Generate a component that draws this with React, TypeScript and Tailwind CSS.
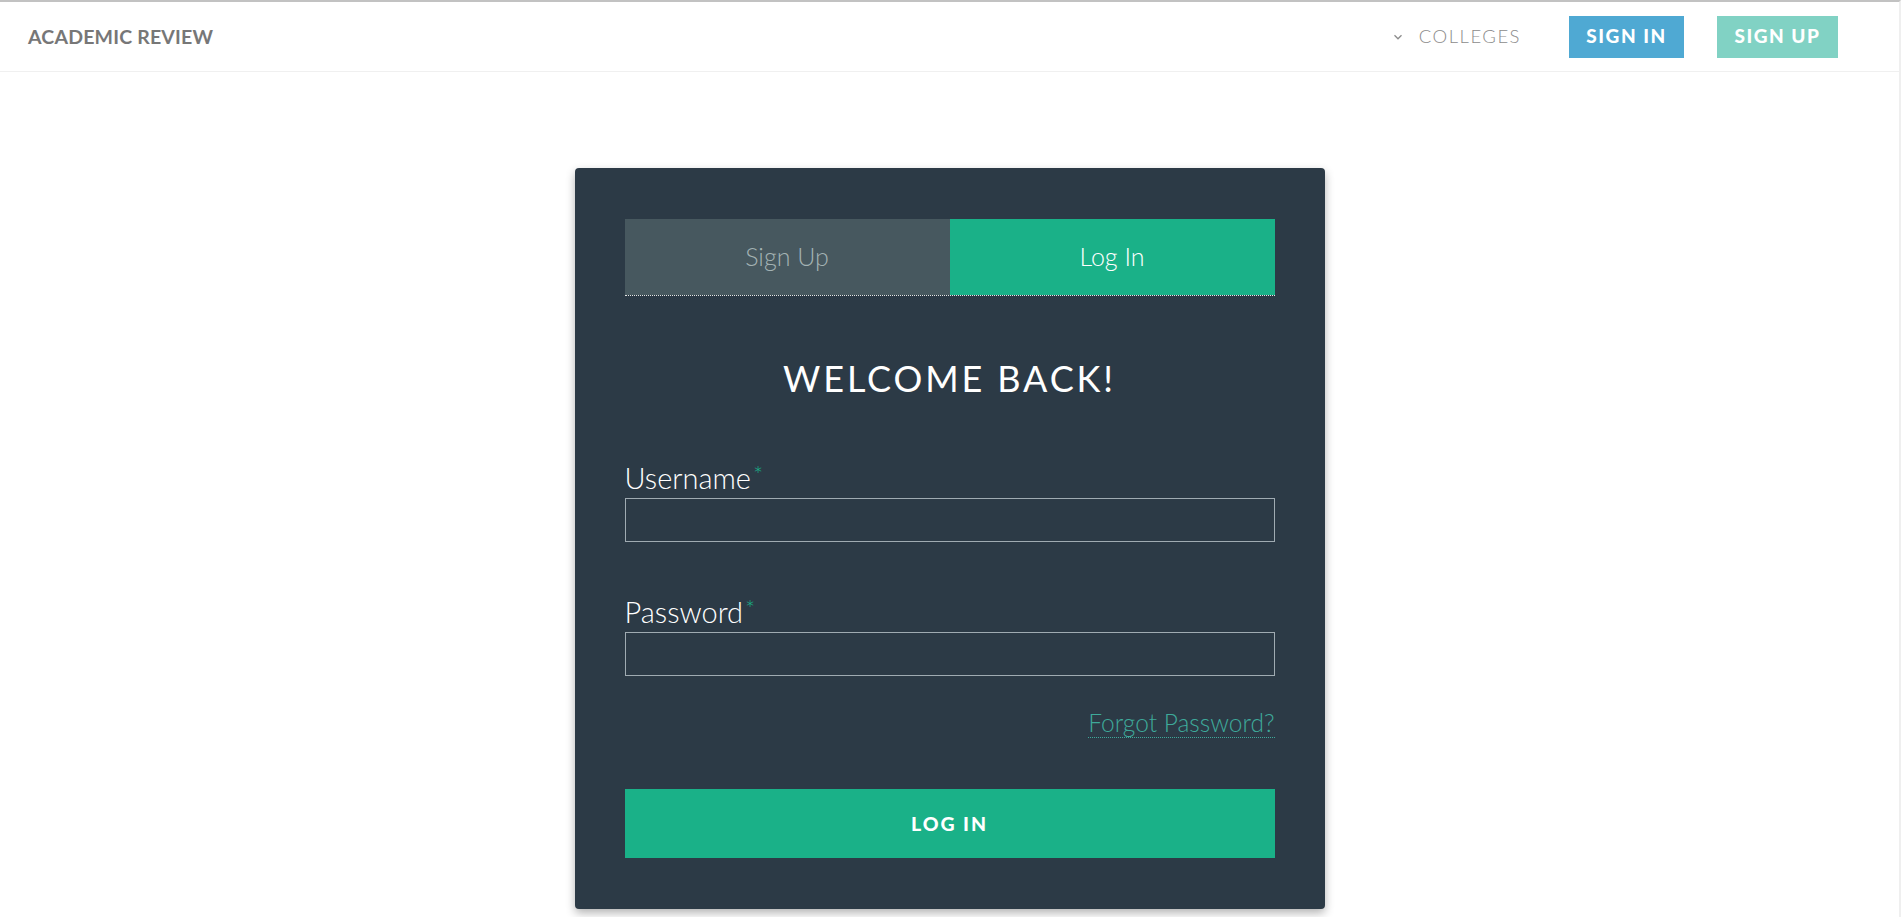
import React, { useState } from 'react';

const font = { fontFamily: 'Lato, "Open Sans", sans-serif' };

const Field = ({ label, type }: { label: string; type: string }) => (
  <div className="flex flex-col">
    <label className="text-[29px] leading-[32px] font-light text-white">
      {label}
      <span className="ml-[2px] text-[#1ab188] text-[24px] align-top leading-[26px]">*</span>
    </label>
    <input
      type={type}
      className="mt-[4px] h-[44px] w-full border border-[#a0abb2] bg-transparent px-3 text-white outline-none"
    />
  </div>
);

export default function App() {
  const [tab, setTab] = useState<'signup' | 'login'>('login');

  return (
    <div
      className="min-h-screen bg-white border-t-2 border-t-[#c2c2c2] border-r-2 border-r-[#efefef]"
      style={font}
    >
      {/* Header */}
      <header className="h-[70px] flex items-center justify-between border-b border-[#f0f0f0] pl-[28px] pr-[61px]">
        <span className="text-[19.5px] font-bold text-[#777777] tracking-[0.01em]">
          ACADEMIC REVIEW
        </span>
        <nav className="flex items-center">
          <button className="flex items-center text-[#8c8c8c]">
            <svg
              className="w-[14px] h-[14px] mr-[14px]"
              fill="none"
              stroke="currentColor"
              viewBox="0 0 24 24"
            >
              <path strokeWidth={2.2} d="M6 9l6 6 6-6" />
            </svg>
            <span className="text-[18.5px] font-light tracking-[0.08em]">COLLEGES</span>
          </button>
          <button className="ml-[48px] w-[115px] h-[42px] bg-[#4fa9d3] text-white text-[19px] font-black tracking-[0.08em]">
            SIGN IN
          </button>
          <button className="ml-[33px] w-[121px] h-[42px] bg-[#81d2c4] text-white text-[19px] font-black tracking-[0.08em]">
            SIGN UP
          </button>
        </nav>
      </header>

      {/* Login card */}
      <main className="flex justify-center pt-[96px]">
        <div className="w-[750px] bg-[#2c3a46] rounded-[4px] shadow-[0_4px_10px_rgba(0,0,0,0.3)] px-[50px] pt-[51px] pb-[51px]">
          <div className="grid grid-cols-2 h-[77px] border-b border-dotted border-[#e6e6e6]">
            <button
              onClick={() => setTab('signup')}
              className={`text-[25px] font-light ${
                tab === 'signup' ? 'bg-[#1ab188] text-white' : 'bg-[#47585f] text-[#a3b2b3]'
              }`}
            >
              Sign Up
            </button>
            <button
              onClick={() => setTab('login')}
              className={`text-[25px] font-light ${
                tab === 'login' ? 'bg-[#1ab188] text-white' : 'bg-[#47585f] text-[#a3b2b3]'
              }`}
            >
              Log In
            </button>
          </div>

          <h1 className="mt-[61px] text-center text-[36px] leading-[42px] font-normal text-white tracking-[0.08em]">
            WELCOME BACK!
          </h1>

          <div className="mt-[63px]">
            <Field label="Username" type="text" />
          </div>
          <div className="mt-[54px]">
            <Field label="Password" type="password" />
          </div>

          <div className="mt-[32px] flex justify-end">
            <a
              href="#"
              className="text-[24.5px] leading-[29px] font-light text-[#3ea99a] border-b border-dotted border-[#3ea99a]"
            >
              Forgot Password?
            </a>
          </div>

          <button className="mt-[51px] w-full h-[69px] bg-[#1ab188] text-white text-[19.5px] font-black tracking-[0.1em]">
            LOG IN
          </button>
        </div>
      </main>
    </div>
  );
}
